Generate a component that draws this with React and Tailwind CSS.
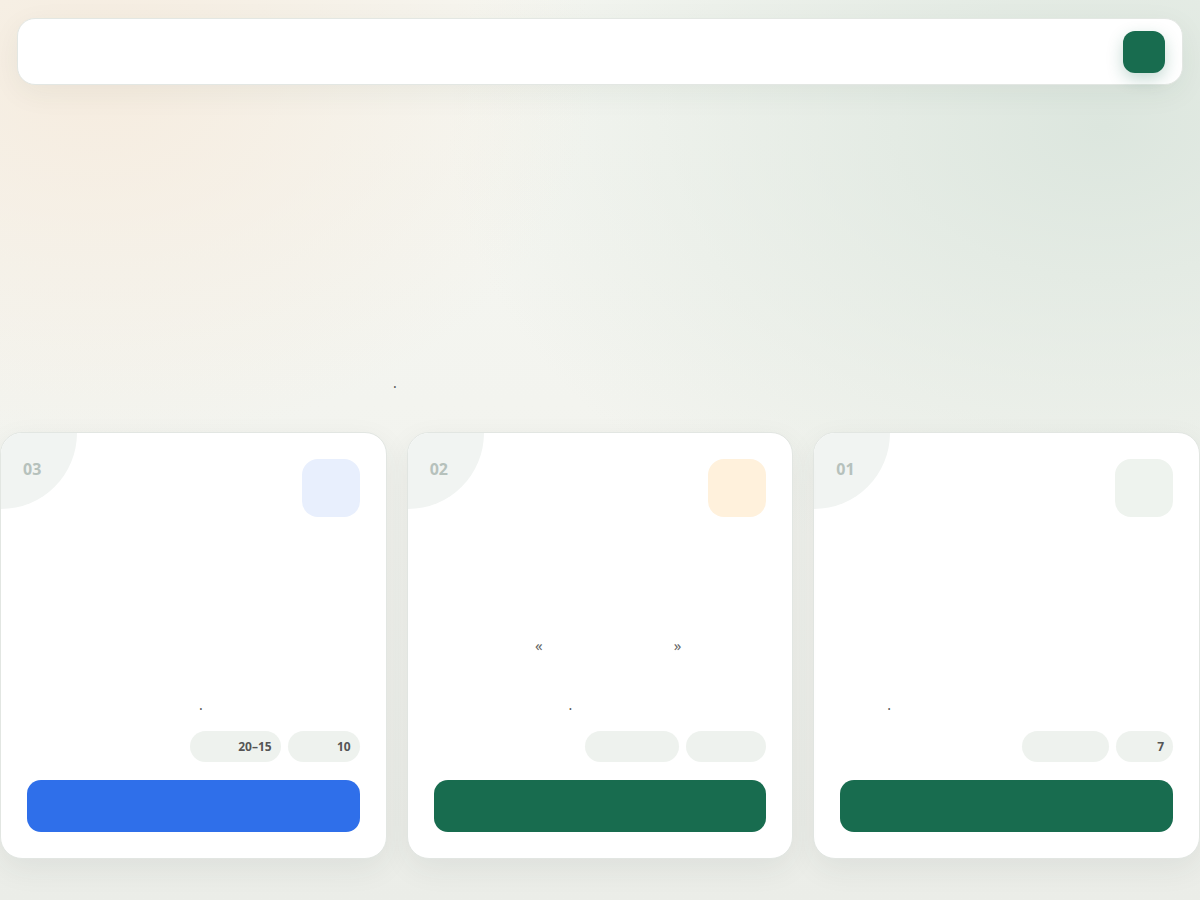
import React from "react";

const cards = [
  {
    num: "01",
    icon: "bg-[#eef3ee]",
    btn: "bg-[#186c4f]",
    dotPad: "pr-[282px]",
    pills: [
      { w: "w-[57px]", t: "7" },
      { w: "w-[87px]", t: "" },
    ],
    quotes: false,
  },
  {
    num: "02",
    icon: "bg-[#fff1dc]",
    btn: "bg-[#186c4f]",
    dotPad: "pr-[194px]",
    pills: [
      { w: "w-[80px]", t: "" },
      { w: "w-[94px]", t: "" },
    ],
    quotes: true,
  },
  {
    num: "03",
    icon: "bg-[#e8effd]",
    btn: "bg-[#2f6fea]",
    dotPad: "pr-[157px]",
    pills: [
      { w: "w-[72px]", t: "10" },
      { w: "w-[91px]", t: "20–15" },
    ],
    quotes: false,
  },
];

function Card({ c }) {
  return (
    <div className="relative overflow-hidden h-[427px] bg-white rounded-[22px] border border-[#e2e6e2] shadow-[0_10px_30px_rgba(40,60,50,0.07)] px-[26px] pt-[26px] pb-[26px] flex flex-col">
      <div className="absolute -top-[76px] -left-[76px] w-[152px] h-[152px] rounded-full bg-[#f1f4f2]" />
      <div className="relative flex flex-row items-start justify-between">
        <div className={`w-[58px] h-[58px] rounded-[16px] ${c.icon}`} />
        <div className="pt-[2px] -ml-[4px] text-[16px] font-bold leading-[16px] text-[#b6c1bc] font-['Noto_Sans',sans-serif]" dir="ltr">
          {c.num}
        </div>
      </div>
      <div className="flex-1 relative">
        {c.quotes && (
          <div className="absolute top-[119px] right-[85px] flex flex-row items-center gap-[131px] text-[15px] leading-[18px] text-[#666] font-['Noto_Sans',sans-serif]" dir="ltr">
            <span>«</span>
            <span>»</span>
          </div>
        )}
      </div>
      <div className={`text-[14px] leading-[16px] pb-[2px] text-[#555] font-['Noto_Sans',sans-serif] ${c.dotPad}`}>
        .
      </div>
      <div className="mt-[16px] flex flex-row gap-[7px]">
        {c.pills.map((p, i) => (
          <div
            key={i}
            className={`${p.w} h-[31px] rounded-full bg-[#eef2ee] flex items-center justify-start pr-[9px] text-[12px] font-bold text-[#555] font-['Noto_Sans',sans-serif]`}
          >
            <span dir="ltr">{p.t}</span>
          </div>
        ))}
      </div>
      <div className={`mt-[18px] h-[52px] rounded-[14px] ${c.btn}`} />
    </div>
  );
}

export default function App() {
  return (
    <div className="min-h-screen w-full bg-[#f4f5f0] bg-[image:radial-gradient(ellipse_at_8%_8%,#f6ecdf_0%,rgba(246,236,223,0)_32%),radial-gradient(ellipse_at_92%_14%,#dce6de_0%,rgba(220,230,222,0)_42%),linear-gradient(to_bottom,#f6f7f2_0%,#f3f4ef_45%,#ebede8_100%)] font-['Noto_Sans',sans-serif] overflow-hidden">
      <div className="pt-[18px] px-[17px]">
        <div className="h-[67px] bg-white rounded-[18px] border border-[#e3e7e3] shadow-[0_8px_30px_rgba(40,60,50,0.06)] flex flex-row items-center justify-end pr-[17px]">
          <div className="w-[42px] h-[42px] rounded-[12px] bg-[#186c4f] shadow-[0_6px_16px_rgba(24,108,79,0.25)]" />
        </div>
      </div>
      <div className="h-[347px] pt-[290px] pl-[393px] text-[14px] leading-[16px] text-[#555]">.</div>
      <div dir="rtl" className="grid grid-cols-3 gap-5">
        {cards.map((c) => (
          <Card key={c.num} c={c} />
        ))}
      </div>
    </div>
  );
}
